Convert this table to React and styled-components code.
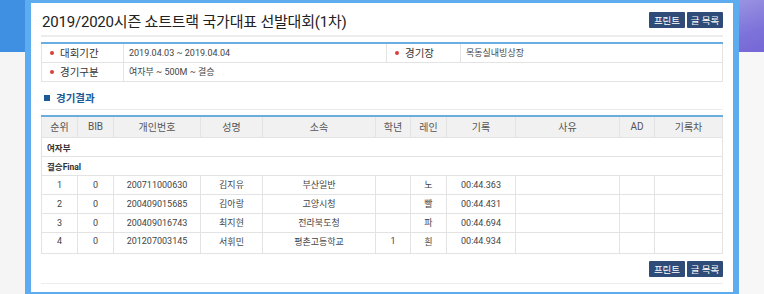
import React from 'react';
import styled, { createGlobalStyle } from 'styled-components';

const GlobalStyle = createGlobalStyle`
  html, body {
    margin: 0;
    padding: 0;
    background: #f4f4f5;
    font-family: Roboto, "Noto Sans CJK KR", "Noto Sans", sans-serif;
    color: #333;
  }
  * { box-sizing: border-box; }
`;

const Page = styled.div`
  display: flex;
  width: 764px;
  height: 294px;
  overflow: hidden;
`;

const SideStrip = styled.div`
  width: 25px;
  flex: none;
  display: flex;
  flex-direction: column;
  background: ${(p) => (p.$right ? '#f7f7f8' : '#f5f5f6')};
`;

const SideTop = styled.div`
  height: 52px;
  background: ${(p) =>
    p.$right
      ? 'linear-gradient(160deg, #9a93e2 0%, #7d72da 60%, #7567d6 100%)'
      : '#3f8fe2'};
`;

const Frame = styled.div`
  flex: none;
  width: 714px;
  min-width: 0;
  border: solid #5eacf0;
  border-width: 3px 6px 2px 6px;
  background: #fff;
  padding: 0 10px;
  display: flex;
  flex-direction: column;
`;

const TitleBar = styled.div`
  display: flex;
  align-items: center;
  justify-content: space-between;
  height: 34px;
  padding-top: 2px;
  border-bottom: 2px solid #ececec;
`;

const Title = styled.h1`
  margin: 0 0 0 1px;
  font-size: 15px;
  font-weight: 400;
  color: #222;
  letter-spacing: -0.2px;
`;

const BtnGroup = styled.div`
  display: flex;
  gap: 2px;
`;

const Btn = styled.button`
  height: 16px;
  padding: 0;
  width: 36px;
  border: none;
  border-radius: 1px;
  background: #2f4b78;
  color: #fff;
  font-family: "Noto Sans CJK KR", sans-serif;
  font-size: 9.5px;
  line-height: 16px;
  cursor: pointer;
`;

const InfoTable = styled.table`
  margin-top: 5px;
  width: 100%;
  border-collapse: collapse;
  border-top: 2px solid #6aaee0;
  border-left: 1px solid #e3e3e3;
  border-right: 1px solid #e3e3e3;
  font-size: 9px;
  color: #444;
  table-layout: fixed;

  td {
    height: 19px;
    padding: 0;
    border-bottom: 1px solid #e3e3e3;
  }
`;

const LabelCell = styled.td`
  width: ${(p) => p.$w}px;
  font-size: 10.5px;
  color: #333;
  padding-left: 8px !important;
  border-right: 1px solid #e3e3e3;
  font-family: "Noto Sans CJK KR", sans-serif;

  &::before {
    content: '';
    display: inline-block;
    width: 4px;
    height: 4px;
    border-radius: 50%;
    background: #d9403c;
    margin-right: 6px;
    vertical-align: middle;
    position: relative;
    top: -1px;
  }
`;

const ValueCell = styled.td`
  width: ${(p) => (p.$w ? `${p.$w}px` : 'auto')};
  padding-left: 5px !important;
  border-right: 1px solid #e3e3e3;
`;

const SectionTitle = styled.h2`
  margin: 0;
  height: 28px;
  display: flex;
  align-items: center;
  padding: 9px 0 4px 3px;
  font-size: 10.5px;
  font-weight: 700;
  color: #1c5a96;
  font-family: "Noto Sans CJK KR", sans-serif;
  border-bottom: 1px solid #ececec;

  &::before {
    content: '';
    width: 6px;
    height: 6px;
    background: #1c5a96;
    margin-right: 6px;
  }
`;

const ResultTable = styled.table`
  margin-top: 5px;
  width: 100%;
  border-collapse: collapse;
  table-layout: fixed;
  border-top: 2px solid #6aaee0;
  border-left: 1px solid #e3e3e3;
  border-right: 1px solid #e3e3e3;
  font-size: 9px;
  color: #444;
`;

const Th = styled.th`
  width: ${(p) => (p.$w ? `${p.$w}px` : 'auto')};
  height: 22px;
  padding: 0;
  background: #f1f1f1;
  font-weight: 400;
  font-size: 10px;
  color: #555;
  border: 1px solid #e3e3e3;
  border-top: none;
  font-family: Roboto, "Noto Sans CJK KR", sans-serif;
`;

const GroupCell = styled.td`
  height: 19px;
  padding: 0 0 0 5px;
  font-weight: 700;
  font-size: 8.5px;
  color: #333;
  border-bottom: 1px solid #e3e3e3;
`;

const Td = styled.td`
  height: ${(p) => (p.$last ? 21 : 19)}px;
  padding: 0 0 ${(p) => (p.$last ? 4 : 1)}px;
  text-align: center;
  border: 1px solid #e3e3e3;
  border-top: none;
`;

const Footer = styled.div`
  display: flex;
  justify-content: flex-end;
  padding: 7px 0 6px;
  border-bottom: 1px solid #ececec;
`;

const columns = [
  ['순위', 36],
  ['BIB', 36],
  ['개인번호', 87],
  ['성명', 62],
  ['소속', 113],
  ['학년', 35],
  ['레인', 36],
  ['기록', 69],
  ['사유', 104],
  ['AD', 35],
  ['기록차', 0],
];

const rows = [
  ['1', '0', '200711000630', '김지유', '부산일반', '', '노', '00:44.363'],
  ['2', '0', '200409015685', '김아랑', '고양시청', '', '빨', '00:44.431'],
  ['3', '0', '200409016743', '최지현', '전라북도청', '', '파', '00:44.694'],
  ['4', '0', '201207003145', '서휘민', '평촌고등학교', '1', '흰', '00:44.934'],
];

const Buttons = () => (
  <BtnGroup>
    <Btn>프린트</Btn>
    <Btn>글 목록</Btn>
  </BtnGroup>
);

const App = () => (
  <>
    <GlobalStyle />
    <Page>
      <SideStrip>
        <SideTop />
      </SideStrip>
      <Frame>
        <TitleBar>
          <Title>2019/2020시즌 쇼트트랙 국가대표 선발대회(1차)</Title>
          <Buttons />
        </TitleBar>

        <InfoTable>
          <tbody>
            <tr>
              <LabelCell $w={82}>대회기간</LabelCell>
              <ValueCell $w={263}>2019.04.03 ~ 2019.04.04</ValueCell>
              <LabelCell $w={74}>경기장</LabelCell>
              <ValueCell>목동실내빙상장</ValueCell>
            </tr>
            <tr>
              <LabelCell>경기구분</LabelCell>
              <ValueCell colSpan={3}>여자부 ~ 500M ~ 결승</ValueCell>
            </tr>
          </tbody>
        </InfoTable>

        <SectionTitle>경기결과</SectionTitle>

        <ResultTable>
          <thead>
            <tr>
              {columns.map(([label, w]) => (
                <Th key={label} $w={w}>
                  {label}
                </Th>
              ))}
            </tr>
          </thead>
          <tbody>
            <tr>
              <GroupCell colSpan={11}>여자부</GroupCell>
            </tr>
            <tr>
              <GroupCell colSpan={11}>결승Final</GroupCell>
            </tr>
            {rows.map((r, i) => {
              const last = i === rows.length - 1;
              return (
                <tr key={r[0]}>
                  {[...r, '', '', ''].map((c, j) => (
                    <Td key={j} $last={last}>
                      {c}
                    </Td>
                  ))}
                </tr>
              );
            })}
          </tbody>
        </ResultTable>

        <Footer>
          <Buttons />
        </Footer>
      </Frame>
      <SideStrip $right>
        <SideTop $right />
      </SideStrip>
    </Page>
  </>
);

export default App;
